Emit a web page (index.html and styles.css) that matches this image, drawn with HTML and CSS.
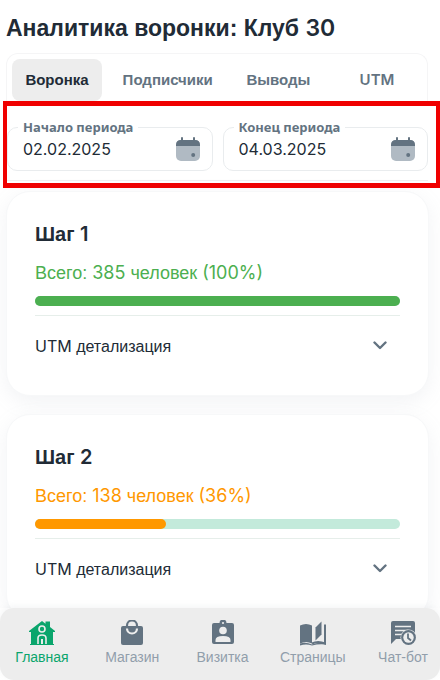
FILE: index.html
```html
<!DOCTYPE html>
<html lang="ru">
<head>
<meta charset="utf-8">
<meta name="viewport" content="width=device-width, initial-scale=1">
<title>Аналитика воронки: Клуб 30</title>
<link rel="stylesheet" href="styles.css">
</head>
<body>
<main class="page">
  <h1 class="title">Аналитика воронки: Клуб <span class="latin">30</span></h1>

  <div class="tabs" role="tablist">
    <button class="tab active" role="tab" aria-selected="true">Воронка</button>
    <button class="tab" role="tab" aria-selected="false">Подписчики</button>
    <button class="tab" role="tab" aria-selected="false">Выводы</button>
    <button class="tab latin" role="tab" aria-selected="false">UTM</button>
  </div>

  <section class="period">
    <div class="fields">
      <fieldset class="field">
        <legend><label for="start">Начало периода</label></legend>
        <input id="start" type="text" value="02.02.2025">
        <button class="calendar" aria-label="Выбрать начало периода">
          <svg viewBox="0 0 24 24" width="24" height="24"><rect y="3" width="24" height="21" rx="5" fill="#b0bac3"/><path d="M0 9V8q0-5 5-5V1q0-1 1-1t1 1v2h10V1q0-1 1-1t1 1v2q5 0 5 5v1z" fill="#637381"/><circle cx="17.200" cy="18" r="2" fill="#637381"/></svg>
        </button>
      </fieldset>
      <fieldset class="field">
        <legend><label for="end">Конец периода</label></legend>
        <input id="end" type="text" value="04.03.2025">
        <button class="calendar" aria-label="Выбрать конец периода">
          <svg viewBox="0 0 24 24" width="24" height="24"><rect y="3" width="24" height="21" rx="5" fill="#b0bac3"/><path d="M0 9V8q0-5 5-5V1q0-1 1-1t1 1v2h10V1q0-1 1-1t1 1v2q5 0 5 5v1z" fill="#637381"/><circle cx="17.200" cy="18" r="2" fill="#637381"/></svg>
        </button>
      </fieldset>
    </div>
  </section>

  <div class="steps">
    <article class="card green">
      <h2>Шаг <span class="latin">1</span></h2>
      <p class="total">Всего: <span class="latin">385</span> человек <span class="latin">(100%)</span></p>
      <div class="bar"><div class="fill" style="width:100%"></div></div>
      <button class="details"><span><span class="latin">UTM</span> детализация</span>
        <svg viewBox="0 0 14 9" width="14" height="9"><path d="M1.500 1.500 7 7l5.500-5.500" fill="none" stroke="#637381" stroke-width="2.400" stroke-linecap="round" stroke-linejoin="round"/></svg>
      </button>
    </article>
    <article class="card orange">
      <h2>Шаг <span class="latin">2</span></h2>
      <p class="total">Всего: <span class="latin">138</span> человек <span class="latin">(36%)</span></p>
      <div class="bar"><div class="fill" style="width:36%"></div></div>
      <button class="details"><span><span class="latin">UTM</span> детализация</span>
        <svg viewBox="0 0 14 9" width="14" height="9"><path d="M1.500 1.500 7 7l5.500-5.500" fill="none" stroke="#637381" stroke-width="2.400" stroke-linecap="round" stroke-linejoin="round"/></svg>
      </button>
    </article>
  </div>
</main>

<nav class="nav">
  <a href="#" class="current">
    <svg viewBox="0 0 26 26" width="26" height="26"><path d="M0 11 13 1l3.500 2.700V1.500H21V7l5 4v1h-2v12h1v1H1v-1h1V12H0z" fill="#0aa56c"/><circle cx="13" cy="9" r="3" fill="none" stroke="#ededed" stroke-width="1.600"/><path d="M9 24v-6q0-3 4-3t4 3v6" fill="none" stroke="#ededed" stroke-width="1.600"/><path d="M12 19h2v5h-2z" fill="#ededed"/></svg>
    Главная</a>
  <a href="#">
    <svg viewBox="0 0 26 26" width="26" height="26"><rect x="2" y="6" width="22" height="19" rx="2" fill="#637381"/><path d="M8 8V5.500a5 5 0 0 1 10 0V8" fill="none" stroke="#637381" stroke-width="2.200"/><path d="M8 8.500a5 5 0 0 0 10 0" fill="none" stroke="#ededed" stroke-width="2.200"/></svg>
    Магазин</a>
  <a href="#">
    <svg viewBox="0 0 26 26" width="26" height="26"><path d="M4 3h5.500a3.500 3.500 0 0 1 7 0H22q2 0 2 2v17q0 2-2 2H4q-2 0-2-2V5q0-2 2-2z" fill="#637381"/><circle cx="13" cy="3" r="1.100" fill="#ededed"/><circle cx="13" cy="10.500" r="3.800" fill="#ededed"/><path d="M5.500 22v-2q0-4 7.500-4t7.500 4v2z" fill="#ededed"/></svg>
    Визитка</a>
  <a href="#">
    <svg viewBox="0 0 26 26" width="26" height="26"><path d="M0 5.500q6-3 12 0v18q-6-3-12 0z" fill="#637381"/><path d="M12 23.500q6-3 13 0V4.500" fill="none" stroke="#637381" stroke-width="2"/><path d="M0 23.500q6-2 12 1 6-3 14-1v1q-7-1-14 1-6-2-12 0z" fill="#637381"/><path d="m15.500 7.500 6-6v13l-6 6z" fill="#637381"/></svg>
    Страницы</a>
  <a href="#">
    <svg viewBox="0 0 26 26" width="26" height="26"><path d="M3 1h20q2 0 2 2v16H6l-5 5V3q0-2 2-2z" fill="#637381"/><path d="M5 6.500h16M5 10.500h13M5 14.500h7" stroke="#ededed" stroke-width="1.600"/><circle cx="18.500" cy="17.500" r="8" fill="#ededed"/><circle cx="18.500" cy="17.500" r="7.400" fill="#637381"/><circle cx="18.500" cy="17.500" r="5.200" fill="#ededed"/><path d="M18 13.500v4.500l3 2.500" fill="none" stroke="#637381" stroke-width="1.800"/></svg>
    Чат-бот</a>
</nav>
</body>
</html>
```
FILE: styles.css
```css
* { box-sizing: border-box; }

body {
  margin: 0;
  height: 100vh;
  display: flex;
  flex-direction: column;
  background: #fff;
  color: #212b36;
  font-family: "Liberation Sans", Arial, sans-serif;
}

button, input { font: inherit; color: inherit; border: 0; background: none; padding: 0; }
button { cursor: pointer; }
.latin { font-family: Inter, "Liberation Sans", sans-serif; }

.page { flex: 1; min-height: 0; overflow-y: auto; scrollbar-width: none; }

.title { margin: 13px 6px 9px; font-size: 23px; line-height: 31px; font-weight: 700; }
.title .latin { font-weight: 600; }

.tabs {
  display: flex;
  justify-content: space-between;
  margin: 0 12px 0 6px;
  padding: 5px 5px 0;
  border: 1px solid #f5f5f6;
  border-bottom: 0;
  border-radius: 12px 12px 0 0;
}
.tab {
  min-width: 90px;
  height: 42px;
  padding: 0 12px 2px;
  border-radius: 8px;
  color: #637381;
  font-size: 15px;
  font-weight: 700;
}
.tab.latin { font-weight: 600; }
.tab.active { background: #ededed; color: #212b36; }

.period {
  margin-left: 3px;
  padding: 12px 8px 2px 0;
  border: solid #f00000;
  border-width: 5px 4px;
}
.fields { display: flex; gap: 10px; padding-bottom: 9px; border-bottom: 1px solid #f0f1f2; }
.field {
  flex: 1;
  min-width: 0;
  display: flex;
  align-items: center;
  margin: 0;
  padding: 0 12px 8px 15px;
  border: 1px solid #e9ecee;
  border-radius: 10px;
}
.field legend {
  margin-left: -5px;
  padding: 0 5px;
  color: #637381;
  font-family: "Noto Sans", sans-serif;
  font-size: 13px;
  line-height: 18px;
  font-weight: 700;
}
.field input { flex: 1; min-width: 0; height: 26px; font-family: Inter, sans-serif; font-size: 16px; }
.calendar { height: 24px; }
svg { display: block; flex: none; }

.steps { display: grid; gap: 18px; padding: 3px 11px 18px 6px; }
.card {
  padding: 28px 28px 20px;
  border: 1px solid #f7f8f9;
  border-radius: 24px;
  background: #fff;
  box-shadow: 0 6px 20px rgba(145, 158, 171, .12);
}
.card h2 { margin: 0 0 12px; font-size: 20px; line-height: 28px; }
.card h2 .latin { font-weight: 600; }
.total { margin: 0 0 10px; font-size: 18px; line-height: 26px; }
.green { --tone: #4caf50; }
.orange { --tone: #ff9800; }
.total { color: var(--tone); }
.bar { height: 10px; border-radius: 5px; background: #c3eadb; }
.fill { height: 10px; border-radius: 5px; background: var(--tone); }
.details {
  display: flex;
  width: 100%;
  height: 60px;
  margin-top: 9px;
  padding-right: 13px;
  align-items: center;
  justify-content: space-between;
  border-top: 1px solid #e6eeea;
  font-size: 16px;
}

.nav {
  position: relative;
  display: flex;
  justify-content: space-between;
  height: 72px;
  padding: 12px 4px 0 9px;
  border-radius: 14px;
  background: #ededed;
  box-shadow: 0 -2px 6px rgba(145, 158, 171, .1);
}
.nav a {
  display: flex;
  flex-direction: column;
  align-items: center;
  gap: 2px;
  width: 66px;
  color: #919eab;
  font-size: 14px;
  line-height: 18px;
  text-decoration: none;
}
.nav .current { color: #0aa56c; }
```
